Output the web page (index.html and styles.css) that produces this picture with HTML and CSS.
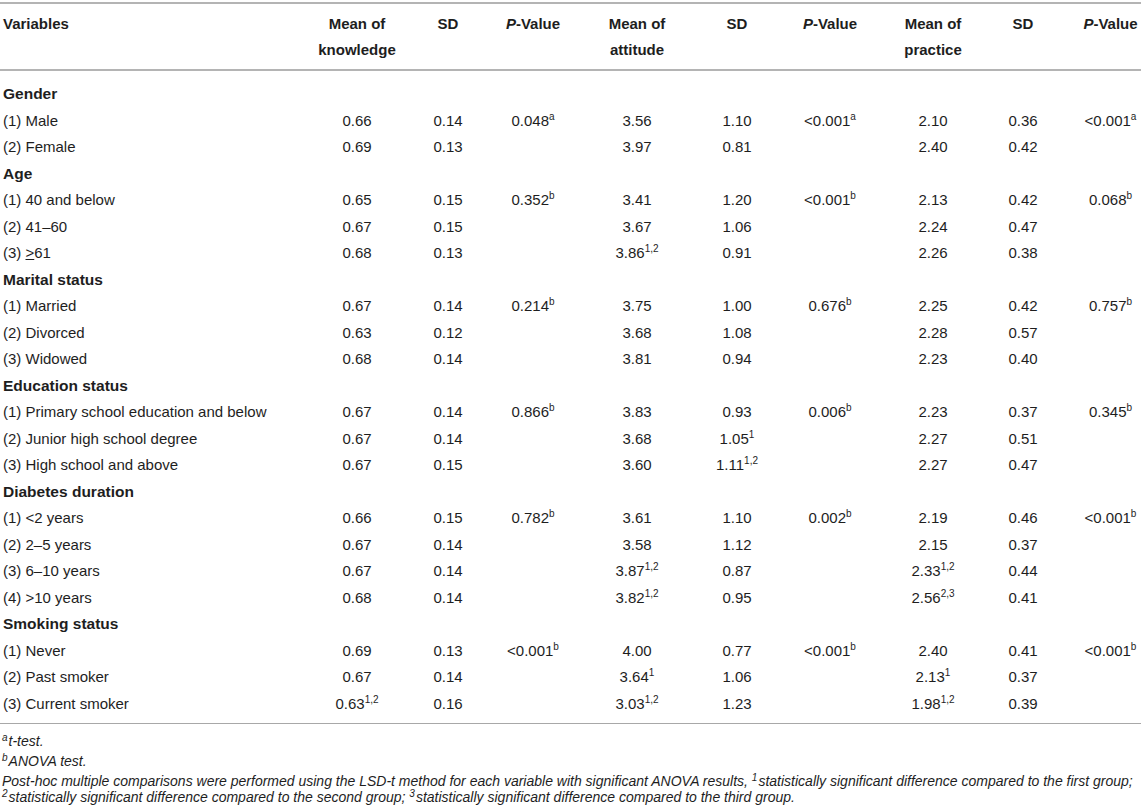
FILE: index.html
```html
<!DOCTYPE html>
<html>
<head lang="en">
    <meta charset="UTF-8">
    <title>Table</title>
    <link rel="stylesheet" href="styles.css">
</head>
<body>
    <table class="kap">
        <colgroup>
            <col class="c-var">
            <col class="c-k"><col class="c-sd1"><col class="c-p1">
            <col class="c-a"><col class="c-sd2"><col class="c-p2">
            <col class="c-pr"><col class="c-sd3"><col class="c-p3">
        </colgroup>
        <thead>
            <tr>
                <th class="left">Variables</th>
                <th>Mean of<br>knowledge</th>
                <th>SD</th>
                <th><i>P</i>-Value</th>
                <th>Mean of<br>attitude</th>
                <th>SD</th>
                <th><i>P</i>-Value</th>
                <th>Mean of<br>practice</th>
                <th>SD</th>
                <th class="last"><i>P</i>-Value</th>
            </tr>
        </thead>
        <tbody>
            <tr class="group first"><td colspan="10">Gender</td></tr>
            <tr><td>(1) Male</td><td>0.66</td><td>0.14</td><td>0.048<sup>a</sup></td><td>3.56</td><td>1.10</td><td>&lt;0.001<sup>a</sup></td><td>2.10</td><td>0.36</td><td class="last">&lt;0.001<sup>a</sup></td></tr>
            <tr><td>(2) Female</td><td>0.69</td><td>0.13</td><td></td><td>3.97</td><td>0.81</td><td></td><td>2.40</td><td>0.42</td><td class="last"></td></tr>

            <tr class="group"><td colspan="10">Age</td></tr>
            <tr><td>(1) 40 and below</td><td>0.65</td><td>0.15</td><td>0.352<sup>b</sup></td><td>3.41</td><td>1.20</td><td>&lt;0.001<sup>b</sup></td><td>2.13</td><td>0.42</td><td class="last">0.068<sup>b</sup></td></tr>
            <tr><td>(2) 41–60</td><td>0.67</td><td>0.15</td><td></td><td>3.67</td><td>1.06</td><td></td><td>2.24</td><td>0.47</td><td class="last"></td></tr>
            <tr><td>(3) <u>&gt;</u>61</td><td>0.68</td><td>0.13</td><td></td><td>3.86<sup>1,2</sup></td><td>0.91</td><td></td><td>2.26</td><td>0.38</td><td class="last"></td></tr>

            <tr class="group"><td colspan="10">Marital status</td></tr>
            <tr><td>(1) Married</td><td>0.67</td><td>0.14</td><td>0.214<sup>b</sup></td><td>3.75</td><td>1.00</td><td>0.676<sup>b</sup></td><td>2.25</td><td>0.42</td><td class="last">0.757<sup>b</sup></td></tr>
            <tr><td>(2) Divorced</td><td>0.63</td><td>0.12</td><td></td><td>3.68</td><td>1.08</td><td></td><td>2.28</td><td>0.57</td><td class="last"></td></tr>
            <tr><td>(3) Widowed</td><td>0.68</td><td>0.14</td><td></td><td>3.81</td><td>0.94</td><td></td><td>2.23</td><td>0.40</td><td class="last"></td></tr>

            <tr class="group"><td colspan="10">Education status</td></tr>
            <tr><td>(1) Primary school education and below</td><td>0.67</td><td>0.14</td><td>0.866<sup>b</sup></td><td>3.83</td><td>0.93</td><td>0.006<sup>b</sup></td><td>2.23</td><td>0.37</td><td class="last">0.345<sup>b</sup></td></tr>
            <tr><td>(2) Junior high school degree</td><td>0.67</td><td>0.14</td><td></td><td>3.68</td><td>1.05<sup>1</sup></td><td></td><td>2.27</td><td>0.51</td><td class="last"></td></tr>
            <tr><td>(3) High school and above</td><td>0.67</td><td>0.15</td><td></td><td>3.60</td><td>1.11<sup>1,2</sup></td><td></td><td>2.27</td><td>0.47</td><td class="last"></td></tr>

            <tr class="group"><td colspan="10">Diabetes duration</td></tr>
            <tr><td>(1) &lt;2 years</td><td>0.66</td><td>0.15</td><td>0.782<sup>b</sup></td><td>3.61</td><td>1.10</td><td>0.002<sup>b</sup></td><td>2.19</td><td>0.46</td><td class="last">&lt;0.001<sup>b</sup></td></tr>
            <tr><td>(2) 2–5 years</td><td>0.67</td><td>0.14</td><td></td><td>3.58</td><td>1.12</td><td></td><td>2.15</td><td>0.37</td><td class="last"></td></tr>
            <tr><td>(3) 6–10 years</td><td>0.67</td><td>0.14</td><td></td><td>3.87<sup>1,2</sup></td><td>0.87</td><td></td><td>2.33<sup>1,2</sup></td><td>0.44</td><td class="last"></td></tr>
            <tr><td>(4) &gt;10 years</td><td>0.68</td><td>0.14</td><td></td><td>3.82<sup>1,2</sup></td><td>0.95</td><td></td><td>2.56<sup>2,3</sup></td><td>0.41</td><td class="last"></td></tr>

            <tr class="group"><td colspan="10">Smoking status</td></tr>
            <tr><td>(1) Never</td><td>0.69</td><td>0.13</td><td>&lt;0.001<sup>b</sup></td><td>4.00</td><td>0.77</td><td>&lt;0.001<sup>b</sup></td><td>2.40</td><td>0.41</td><td class="last">&lt;0.001<sup>b</sup></td></tr>
            <tr><td>(2) Past smoker</td><td>0.67</td><td>0.14</td><td></td><td>3.64<sup>1</sup></td><td>1.06</td><td></td><td>2.13<sup>1</sup></td><td>0.37</td><td class="last"></td></tr>
            <tr class="end"><td>(3) Current smoker</td><td>0.63<sup>1,2</sup></td><td>0.16</td><td></td><td>3.03<sup>1,2</sup></td><td>1.23</td><td></td><td>1.98<sup>1,2</sup></td><td>0.39</td><td class="last"></td></tr>
        </tbody>
    </table>

    <div class="notes">
        <p class="note"><sup>a</sup>t-test.</p>
        <p class="note"><sup>b</sup>ANOVA test.</p>
        <p class="note post">Post-hoc multiple comparisons were performed using the LSD-t method for each variable with significant ANOVA results, <sup>1</sup>statistically significant difference compared to the first group;<br><sup>2</sup>statistically significant difference compared to the second group; <sup>3</sup>statistically significant difference compared to the third group.</p>
    </div>
</body>
</html>
```

FILE: styles.css
```css
*{
    box-sizing: border-box;
}
body{
    margin: 0;
    padding-top: 2px;
    background: #fff;
    color: #1e1e1e;
    font-family: "Liberation Sans", Arial, sans-serif;
    font-size: 15px;
}
.kap{
    width: 1141px;
    border-collapse: collapse;
    table-layout: fixed;
}
.c-var{width: 306px;}
.c-k{width: 102px;}
.c-sd1{width: 80px;}
.c-p1{width: 90px;}
.c-a{width: 118px;}
.c-sd2{width: 82px;}
.c-p2{width: 104px;}
.c-pr{width: 102px;}
.c-sd3{width: 78px;}
.c-p3{width: 79px;}

thead tr{
    border-top: 2px solid #b4b4b4;
    border-bottom: 2px solid #b4b4b4;
}
th{
    font-weight: bold;
    text-align: center;
    vertical-align: top;
    line-height: 26px;
    padding: 7px 0 6px;
}
th i{font-style: italic;}
th.left{
    text-align: left;
    padding-left: 3px;
}
td{
    text-align: center;
    line-height: 26.5px;
    padding: 0;
    white-space: nowrap;
}
td:first-child{
    text-align: left;
    padding-left: 3px;
}
.last{
    padding-left: 18px;
}
.group td{
    font-weight: bold;
    font-size: 15.5px;
}
.first td{
    padding-top: 10px;
}
.end{
    border-bottom: 1.5px solid #a8a8a8;
}
.end td{
    padding-bottom: 6px;
}
td u{
    text-decoration: underline;
    text-underline-offset: 1px;
}
sup{
    font-size: 10px;
    line-height: 0;
    vertical-align: 6px;
}

.notes{
    padding: 7px 0 0 2px;
}
.note{
    margin: 0;
    font-style: italic;
    font-size: 14px;
    line-height: 20px;
}
.note sup{
    font-size: 10px;
    vertical-align: 5px;
    margin-right: 1px;
}
.post{
    line-height: 16px;
    margin-top: 2px;
    white-space: nowrap;
}
```
